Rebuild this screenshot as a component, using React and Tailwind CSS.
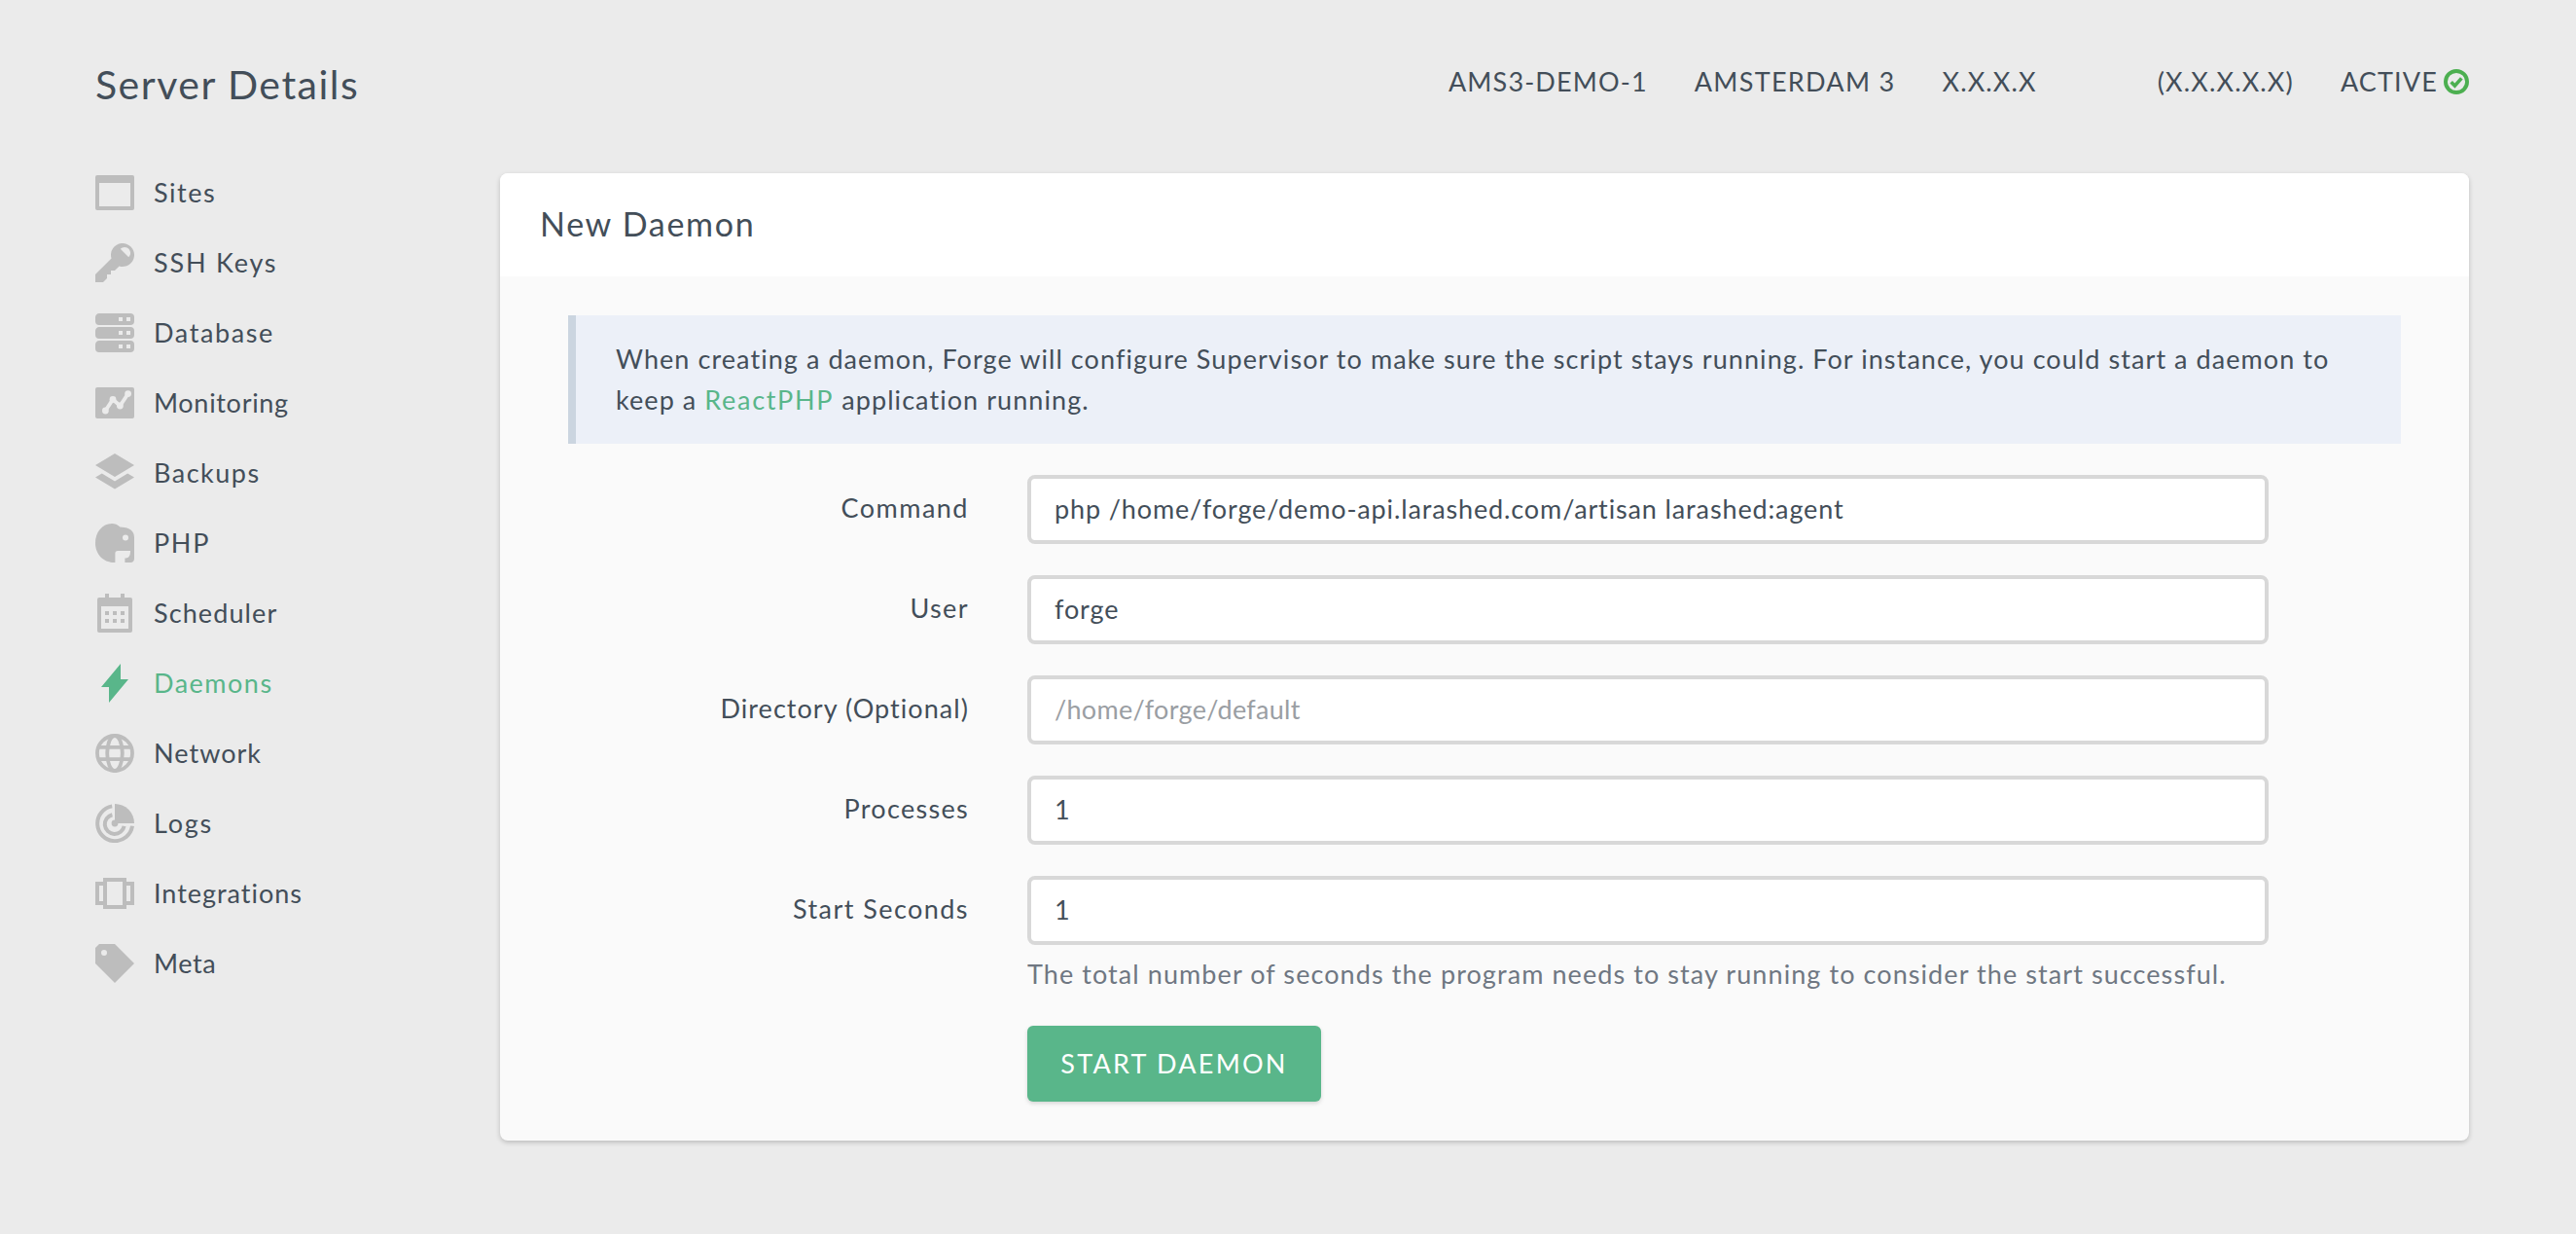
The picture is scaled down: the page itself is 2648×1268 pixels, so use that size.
import React from "react";

const Svg = ({ children, className = "", vb = "0 0 20 20" }) => (
  <svg viewBox={vb} className={`w-[40px] h-[40px] shrink-0 fill-current ${className}`}>{children}</svg>
);

const icons = {
  Sites: <path fillRule="evenodd" d="M1 1h18a1 1 0 0 1 1 1v16a1 1 0 0 1-1 1H1a1 1 0 0 1-1-1V2a1 1 0 0 1 1-1zm1 4v12h16V5H2z" />,
  "SSH Keys": <path d="M12.260 11.740L10 14H8v2H6v2l-2 2H0v-4l8.260-8.260a6 6 0 1 1 4 4zm4.860-4.620A3 3 0 0 0 15 2a3 3 0 0 0-2.120.880l4.240 4.240z" />,
  Database: <path fillRule="evenodd" d="M0 2C0 .9.9 0 2 0h16a2 2 0 0 1 2 2v2a2 2 0 0 1-2 2H2a2 2 0 0 1-2-2V2zm0 7c0-1.100.9-2 2-2h16a2 2 0 0 1 2 2v2a2 2 0 0 1-2 2H2a2 2 0 0 1-2-2V9zm0 7c0-1.100.9-2 2-2h16a2 2 0 0 1 2 2v2a2 2 0 0 1-2 2H2a2 2 0 0 1-2-2v-2zM12 2v2h2V2h-2zm4 0v2h2V2h-2zm0 7v2h2V9h-2zm-4 0v2h2V9h-2zm0 7v2h2v-2h-2zm4 0v2h2v-2h-2z" />,
  Monitoring: (
    <>
      <path d="M1 2h18a1 1 0 0 1 1 1v14a1 1 0 0 1-1 1H1a1 1 0 0 1-1-1V3a1 1 0 0 1 1-1z" />
      <path d="M5.200 14L9 8.200L12.700 11.500L16.800 5.300" fill="none" stroke="#ebebeb" strokeWidth="1.900" strokeLinejoin="round" />
      <g fill="#ebebeb">
        <circle cx="5.200" cy="14" r="1.700" />
        <circle cx="9" cy="8.200" r="1.700" />
        <circle cx="12.700" cy="11.500" r="1.700" />
        <circle cx="16.800" cy="5.300" r="1.700" />
      </g>
    </>
  ),
  Backups: <path d="M10 0l10 6-10 6L0 6l10-6zM16.600 10.200L20 12.200l-10 6-10-6 3.400-2L10 14.200l6.600-4z" />,
  PHP: (
    <path fillRule="evenodd" d="M8.500 0C10 0 11.500.6 12.700 1.700 15.500 1.800 20 2.500 20 7v11c0 1.200-.8 2-1.800 2h-3v-2.200c1.500 0 2.800-.6 2.800-3.800h-6.500c-.8 0-1.300.5-1.300 1.300V20h-.7C4 20 0 15.500 0 10 0 4.500 3.500 0 8.500 0zM15.500 5.800a1.500 1.500 0 1 0 0 3 1.500 1.500 0 0 0 0-3z" />
  ),
  Scheduler: (
    <path fillRule="evenodd" d="M2 2h3V0h2v2h6V0h2v2h3a1 1 0 0 1 1 1v16a1 1 0 0 1-1 1H2a1 1 0 0 1-1-1V3a1 1 0 0 1 1-1zm1 4.500V18h14V6.500H3zM5 9h2v2H5V9zm4 0h2v2H9V9zm4 0h2v2h-2V9zm-8 4h2v2H5v-2zm4 0h2v2H9v-2zm4 0h2v2h-2v-2z" />
  ),
  Daemons: <path d="M13 8V0L8.110 5.870 3 12h4v8L17 8h-4z" />,
  Network: (
    <g fill="none" stroke="currentColor" strokeWidth="1.900">
      <circle cx="10" cy="10" r="9" />
      <ellipse cx="10" cy="10" rx="3.900" ry="9" />
      <path d="M1 6.900h18M1 13.100h18" />
    </g>
  ),
  Logs: (
    <>
      <path d="M10 0a10 10 0 0 1 10 10H10V0z" />
      <path d="M8.600 1.200A9 9 0 1 0 19 11.400" fill="none" stroke="currentColor" strokeWidth="2" />
      <path d="M8.700 5.600A5 5 0 1 0 14.800 11.400" fill="none" stroke="currentColor" strokeWidth="2" />
      <circle cx="10" cy="10" r="1.700" />
    </>
  ),
  Integrations: <path fillRule="evenodd" d="M16 16v2H4v-2H0V4h4V2h12v2h4v12h-4zM14 5.500V4H6v12h8V5.500zm2 .5v8h2V6h-2zM4 6H2v8h2V6z" />,
  Meta: <path fillRule="evenodd" d="M0 10V2l2-2h8l10 10-10 10L0 10zm4.500-4a1.500 1.500 0 1 0 0-3 1.500 1.500 0 0 0 0 3z" />,
};

const nav = [
  { n: "Sites", t: "tracking-[1.55px]" },
  { n: "SSH Keys", t: "tracking-[1.8px]" },
  { n: "Database", t: "tracking-[1.6px]" },
  { n: "Monitoring", t: "tracking-[0.7px]" },
  { n: "Backups", t: "tracking-[1.5px]" },
  { n: "PHP", t: "tracking-[1.65px]" },
  { n: "Scheduler", t: "tracking-[1.1px]" },
  { n: "Daemons", t: "tracking-[1.5px]" },
  { n: "Network", t: "tracking-[1.03px]" },
  { n: "Logs", t: "tracking-[1.8px]" },
  { n: "Integrations", t: "tracking-[0.97px]" },
  { n: "Meta", t: "tracking-[0.55px]" },
];

const fields = [
  { label: "Command", t: "tracking-[1.5px]", value: "php /home/forge/demo-api.larashed.com/artisan larashed:agent" },
  { label: "User", t: "tracking-[1.4px]", value: "forge" },
  { label: "Directory (Optional)", t: "tracking-[1.05px]", placeholder: "/home/forge/default" },
  { label: "Processes", t: "tracking-[1.3px]", value: "1" },
  { label: "Start Seconds", t: "tracking-[1.45px]", value: "1" },
];

export default function App() {
  return (
    <div className="w-[2648px] h-[1268px] overflow-hidden bg-[#ebebeb] pl-[98px] pr-[110px] pt-[60px] text-[#434e59] text-[27px] font-['Lato','Open_Sans',sans-serif]">
      <header className="flex items-center justify-between h-[56px]">
        <h1 className="text-[41px] leading-[56px] tracking-[1.5px] -mt-[2px]">Server Details</h1>
        <div className="flex items-center gap-[48px] -mt-[8px] uppercase tracking-[1.15px]">
          <span>AMS3-DEMO-1</span>
          <span className="tracking-[1.3px]">Amsterdam 3</span>
          <span>X.X.X.X</span>
          <span className="ml-[76px]">(X.X.X.X.X)</span>
          <span className="flex items-center gap-[6px]">
            ACTIVE
            <svg viewBox="0 0 20 20" className="w-[26px] h-[26px] text-[#4caf50]">
              <circle cx="10" cy="10" r="8.500" fill="none" stroke="currentColor" strokeWidth="3" />
              <path d="M5.900 10.200l2.900 3 5.300-6" fill="none" stroke="currentColor" strokeWidth="2.800" />
            </svg>
          </span>
        </div>
      </header>

      <div className="flex mt-[62px]">
        <nav className="w-[416px] shrink-0 flex flex-col -mt-[16px] self-start">
          {nav.map(({ n, t }) => {
            const active = n === "Daemons";
            return (
              <a key={n} className={`flex items-center gap-[20px] h-[72px] ${active ? "text-[#59b68a]" : ""}`}>
                <Svg className={active ? "text-[#59b68a]" : "text-[#bdbdbd]"}>{icons[n]}</Svg>
                <span className={t}>{n}</span>
              </a>
            );
          })}
        </nav>

        <main className="flex-1 rounded-[8px] overflow-hidden bg-[#fafafa] shadow-[0_2px_5px_rgba(0,0,0,0.2)] h-[994px]">
          <div className="bg-white h-[106px] px-[41px] pb-[4px] flex items-center text-[34px] tracking-[1.7px]">New Daemon</div>
          <div className="px-[70px] pt-[40px]">
            <div className="h-[132px] bg-[#ecf0f8] border-l-[8px] border-[#cbd5e0] pl-[41px] pr-[60px] flex items-center leading-[42px] tracking-[1.07px]">
              <p>
                When creating a daemon, Forge will configure Supervisor to make sure the script stays running. For instance, you could start a daemon to keep a <a className="text-[#59b68a] tracking-[1.7px]">ReactPHP</a> application running.
              </p>
            </div>
            <form className="mt-[32px] flex flex-col gap-[32px]">
              {fields.map((f) => (
                <div key={f.label} className="flex items-center">
                  <label className={`w-[412px] text-right shrink-0 -mt-[2px] ${f.t}`}>{f.label}</label>
                  <input
                    readOnly
                    value={f.value}
                    placeholder={f.placeholder}
                    className="ml-[60px] w-[1276px] h-[71px] bg-white border-[4px] border-[#d8d8d8] rounded-[8px] px-[24px] pb-[2px] outline-none tracking-[0.87px] placeholder:text-[#9a9ea3] placeholder:tracking-[0.3px]"
                  />
                </div>
              ))}
            </form>
            <div className="ml-[472px]">
              <p className="mt-[12px] leading-[36px] text-[#6f7782] tracking-[1.08px]">The total number of seconds the program needs to stay running to consider the start successful.</p>
              <button type="button" className="mt-[35px] w-[302px] h-[78px] bg-[#59b68a] rounded-[6px] text-white shadow-[0_2px_4px_rgba(0,0,0,0.15)] uppercase tracking-[2.25px]">Start Daemon</button>
            </div>
          </div>
        </main>
      </div>
    </div>
  );
}
